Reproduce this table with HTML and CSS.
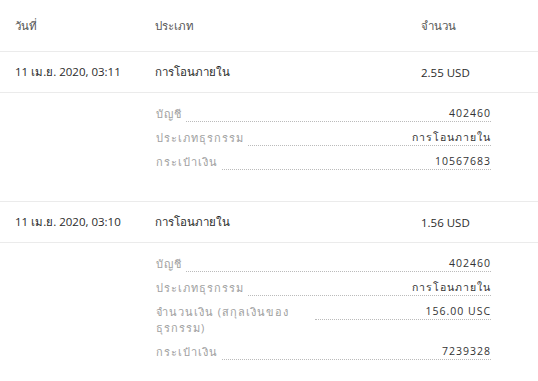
FILE: index.html
```html
<!DOCTYPE html>
<html lang="th">
<head>
<meta charset="utf-8">
<link rel="stylesheet" href="styles.css">
</head>
<body>
<div class="table">
  <div class="row head">
    <div class="c1">วันที่</div>
    <div class="c2">ประเภท</div>
    <div class="c3">จำนวน</div>
  </div>
  <div class="row main">
    <div class="c1">11 เม.ย. 2020, 03:11</div>
    <div class="c2">การโอนภายใน</div>
    <div class="c3">2.55 USD</div>
  </div>
  <div class="details">
    <div class="d"><span class="lbl">บัญชี</span><span class="val">402460</span></div>
    <div class="d"><span class="lbl">ประเภทธุรกรรม</span><span class="val">การโอนภายใน</span></div>
    <div class="d"><span class="lbl">กระเป๋าเงิน</span><span class="val">10567683</span></div>
  </div>
  <div class="row main">
    <div class="c1">11 เม.ย. 2020, 03:10</div>
    <div class="c2">การโอนภายใน</div>
    <div class="c3">1.56 USD</div>
  </div>
  <div class="details">
    <div class="d"><span class="lbl">บัญชี</span><span class="val">402460</span></div>
    <div class="d"><span class="lbl">ประเภทธุรกรรม</span><span class="val">การโอนภายใน</span></div>
    <div class="d"><span class="lbl">จำนวนเงิน (สกุลเงินของธุรกรรม)</span><span class="val">156.00 USC</span></div>
    <div class="d"><span class="lbl">กระเป๋าเงิน</span><span class="val">7239328</span></div>
  </div>
</div>
</body>
</html>
```

FILE: styles.css
```css
html, body {
  margin: 0;
  padding: 0;
  background: #fff;
}
body {
  font-family: "Open Sans", "Noto Sans", sans-serif;
  color: #333;
  font-size: 11.5px;
}
.table {
  width: 538px;
}
.row {
  display: flex;
  align-items: center;
  border-bottom: 1px solid #ebebeb;
}
.row.head {
  height: 51px;
  color: #555;
}
.row.main {
  height: 40px;
  color: #2b2b2b;
}
.c1 {
  width: 140px;
  padding-left: 15px;
}
.c2 {
  width: 266px;
}
.c3 {
  flex: 1;
}
.details {
  padding: 13px 47px 31px 156px;
  border-bottom: 1px solid #ebebeb;
  display: flex;
  flex-direction: column;
  gap: 8px;
}
.details:last-child {
  border-bottom: none;
}
.d {
  display: flex;
  align-items: flex-start;
  font-size: 11px;
  letter-spacing: 1px;
  line-height: 16px;
}
.lbl {
  color: #a0a0a0;
  max-width: 155px;
  padding-right: 4px;
}
.val {
  flex: 1;
  text-align: right;
  color: #333;
  font-size: 10.5px;
  border-bottom: 1px dotted #bbb;
  line-height: 15px;
}
```
